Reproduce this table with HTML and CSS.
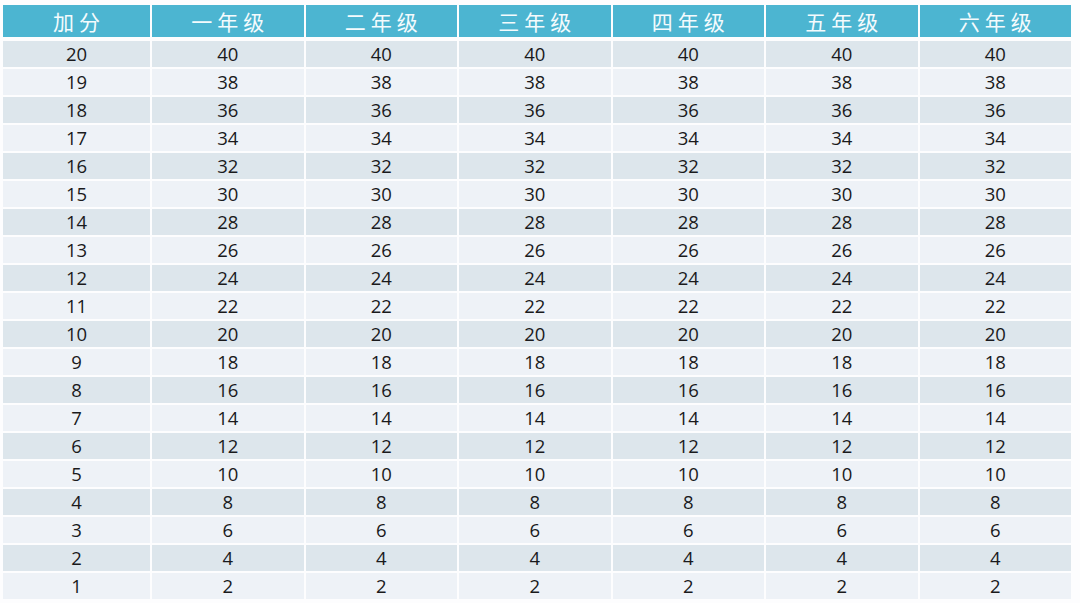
FILE: index.html
```html
<!DOCTYPE html>
<html lang="zh">
<head>
<meta charset="utf-8">
<title>加分表</title>
<link rel="stylesheet" href="styles.css">
</head>
<body>
<table class="score">
<colgroup><col class="c-first"><col><col><col><col><col><col></colgroup>
<thead>
<tr><th>加分</th><th>一年级</th><th>二年级</th><th>三年级</th><th>四年级</th><th>五年级</th><th>六年级</th></tr>
</thead>
<tbody>
<tr><td>20</td><td>40</td><td>40</td><td>40</td><td>40</td><td>40</td><td>40</td></tr>
<tr><td>19</td><td>38</td><td>38</td><td>38</td><td>38</td><td>38</td><td>38</td></tr>
<tr><td>18</td><td>36</td><td>36</td><td>36</td><td>36</td><td>36</td><td>36</td></tr>
<tr><td>17</td><td>34</td><td>34</td><td>34</td><td>34</td><td>34</td><td>34</td></tr>
<tr><td>16</td><td>32</td><td>32</td><td>32</td><td>32</td><td>32</td><td>32</td></tr>
<tr><td>15</td><td>30</td><td>30</td><td>30</td><td>30</td><td>30</td><td>30</td></tr>
<tr><td>14</td><td>28</td><td>28</td><td>28</td><td>28</td><td>28</td><td>28</td></tr>
<tr><td>13</td><td>26</td><td>26</td><td>26</td><td>26</td><td>26</td><td>26</td></tr>
<tr><td>12</td><td>24</td><td>24</td><td>24</td><td>24</td><td>24</td><td>24</td></tr>
<tr><td>11</td><td>22</td><td>22</td><td>22</td><td>22</td><td>22</td><td>22</td></tr>
<tr><td>10</td><td>20</td><td>20</td><td>20</td><td>20</td><td>20</td><td>20</td></tr>
<tr><td>9</td><td>18</td><td>18</td><td>18</td><td>18</td><td>18</td><td>18</td></tr>
<tr><td>8</td><td>16</td><td>16</td><td>16</td><td>16</td><td>16</td><td>16</td></tr>
<tr><td>7</td><td>14</td><td>14</td><td>14</td><td>14</td><td>14</td><td>14</td></tr>
<tr><td>6</td><td>12</td><td>12</td><td>12</td><td>12</td><td>12</td><td>12</td></tr>
<tr><td>5</td><td>10</td><td>10</td><td>10</td><td>10</td><td>10</td><td>10</td></tr>
<tr><td>4</td><td>8</td><td>8</td><td>8</td><td>8</td><td>8</td><td>8</td></tr>
<tr><td>3</td><td>6</td><td>6</td><td>6</td><td>6</td><td>6</td><td>6</td></tr>
<tr><td>2</td><td>4</td><td>4</td><td>4</td><td>4</td><td>4</td><td>4</td></tr>
<tr><td>1</td><td>2</td><td>2</td><td>2</td><td>2</td><td>2</td><td>2</td></tr>
</tbody>
</table>
</body>
</html>
```
FILE: styles.css
```css
html, body {
  margin: 0;
  padding: 0;
  background: #fdfdfe;
}
body {
  padding: 3px 0 0 1px;
}
.score {
  border-collapse: separate;
  border-spacing: 2px;
  table-layout: fixed;
  width: 1072px;
  font-family: "Open Sans", "Noto Sans CJK SC", sans-serif;
}
.score .c-first {
  width: 147px;
}
.score th {
  height: 32px;
  padding: 0;
  border-bottom: 2px solid transparent;
  background: #4cb5d1;
  background-clip: padding-box;
  color: #f4fbfd;
  font-family: "Noto Sans CJK SC", sans-serif;
  font-weight: 400;
  font-size: 21px;
  letter-spacing: 5px;
  text-indent: 5px;
  line-height: 32px;
  text-align: center;
}
.score td {
  height: 26px;
  padding: 0;
  text-align: center;
  font-size: 18.5px;
  line-height: 26px;
  color: #1a1a1c;
  background: #eef2f7;
}
.score tbody tr:nth-child(odd) td {
  background: #dde6ec;
}
```
